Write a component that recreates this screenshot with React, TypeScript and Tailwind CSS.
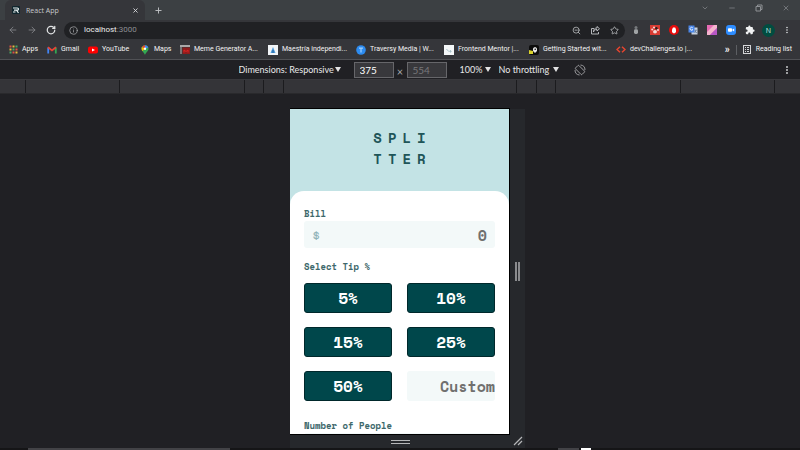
import type { ReactNode } from "react";
import {
  ArrowLeft,
  ArrowRight,
  RotateCw,
  Info,
  X,
  Plus,
  Star,
  ZoomOut,
  ChevronDown,
  Minus,
} from "lucide-react";
import { MdMoreVert, MdExtension } from "react-icons/md";

function RulerTicks({ left }: { left: boolean }) {
  const widths = ["w-[26px]", "w-[94px]", "w-[125px]", "w-[19px]", "w-5"];
  const ordered = left ? widths : [...widths].reverse();
  return (
    <>
      {ordered.map((w) => (
        <div
          key={w}
          className={`${w} shrink-0 ${left ? "border-r" : "border-l"} border-[#1b1b1e]`}
        />
      ))}
    </>
  );
}

function Bookmark({ icon, label, width }: { icon: ReactNode; label: string; width: string }) {
  return (
    <a href="#" className={`flex shrink-0 items-center gap-1 whitespace-nowrap ${width}`}>
      <span className="flex w-[10px] shrink-0 justify-center">{icon}</span>
      {label}
    </a>
  );
}

function AppsIcon() {
  const colors = ["#e05247", "#e8b93c", "#4aa564"];
  return (
    <svg width="9" height="9" viewBox="0 0 9 9">
      {[0, 1, 2].map((r) =>
        [0, 1, 2].map((c) => (
          <rect key={`${r}${c}`} x={c * 3 + 0.5} y={r * 3 + 0.5} width="2" height="2" fill={colors[(r + c) % 3]} />
        )),
      )}
    </svg>
  );
}

function GmailIcon() {
  return (
    <svg width="10" height="8" viewBox="0 0 10 8">
      <path d="M1.2 7.5V1.5" stroke="#4285f4" strokeWidth="1.8" />
      <path d="M8.8 7.5V1.5" stroke="#34a853" strokeWidth="1.8" />
      <path d="M1 1.2L5 4.4L9 1.2" stroke="#ea4335" strokeWidth="1.8" fill="none" />
    </svg>
  );
}

function YouTubeIcon() {
  return (
    <svg width="10" height="8" viewBox="0 0 10 8">
      <rect y="0.5" width="10" height="7" rx="2" fill="#f00" />
      <path d="M4 2.4L7 4L4 5.6Z" fill="#fff" />
    </svg>
  );
}

function MapsIcon() {
  return (
    <svg width="8" height="10" viewBox="0 0 8 10">
      <path d="M4 10C3.6 7.5 0.5 6.4 0.5 3.7A3.5 3.5 0 0 1 4 0.2A3.5 3.5 0 0 1 7.5 3.7C7.5 6.4 4.4 7.5 4 10Z" fill="#34a853" />
      <path d="M0.9 2A3.5 3.5 0 0 1 4 0.2L4 3.7Z" fill="#ea4335" />
      <path d="M4 0.2A3.5 3.5 0 0 1 7.3 2.5L4 3.7Z" fill="#4285f4" />
      <path d="M0.9 2L4 3.7L1.5 6.1C0.6 5 0.2 3.5 0.9 2Z" fill="#fbbc04" />
      <circle cx="4" cy="3.7" r="1.2" fill="#fff" />
    </svg>
  );
}

function MemeIcon() {
  return (
    <svg width="10" height="9" viewBox="0 0 10 9">
      <rect width="10" height="2" fill="#a9a9a9" />
      <rect y="2" width="2" height="7" fill="#777" />
      <rect x="2.5" y="2.5" width="7.5" height="6.5" fill="#8e1c1c" />
      <path d="M4 7.5V5L6 6.5L8 5V7.5" stroke="#d22" fill="none" />
    </svg>
  );
}

function MaestriaIcon() {
  return (
    <svg width="10" height="10" viewBox="0 0 10 10">
      <rect width="10" height="10" fill="#f1f4f7" />
      <path d="M5 2L7.5 8H2.5Z" fill="#4f9bd9" />
      <path d="M5 5V8" stroke="#1c5f9d" />
    </svg>
  );
}

function TraversyIcon() {
  return (
    <svg width="10" height="10" viewBox="0 0 10 10">
      <circle cx="5" cy="5" r="4.8" fill="#2d8cf0" />
      <path d="M3 3.2H7M5 3.2V7.5" stroke="#9fd0ff" strokeWidth="1.2" />
    </svg>
  );
}

function FrontendMentorIcon() {
  return (
    <svg width="10" height="10" viewBox="0 0 10 10">
      <rect width="10" height="10" fill="#f4f7f8" />
      <path d="M2.5 4C3.5 6 5 6.5 7 6.5M6 5L7.3 6.5L6 7.5" stroke="#9bb8c0" strokeWidth="0.8" fill="none" />
    </svg>
  );
}

function GettingStartedIcon() {
  return (
    <svg width="10" height="10" viewBox="0 0 10 10">
      <rect width="10" height="10" rx="2" fill="#0c0c0c" />
      <path d="M0 5L4 6V9H0Z" fill="#d9d22a" />
      <path d="M4 4C4 1.5 8 1.5 8 4V6L6 8L4 6Z" fill="#e9e9e9" />
      <circle cx="6.2" cy="4.2" r="0.8" fill="#111" />
    </svg>
  );
}

function DevChallengesIcon() {
  return (
    <svg width="10" height="7" viewBox="0 0 10 7">
      <path d="M4 0.8L1 3.5L4 6.2M6 0.8L9 3.5L6 6.2" stroke="#e8452f" strokeWidth="1.5" fill="none" />
    </svg>
  );
}

function ReadingListIcon() {
  return (
    <svg width="8" height="9" viewBox="0 0 8 9">
      <rect x="0.5" y="0.5" width="7" height="8" fill="none" stroke="#d5d6d8" />
      <path d="M2 2.5H3M4 2.5H6M2 4.5H3M4 4.5H6M2 6.5H3M4 6.5H6" stroke="#d5d6d8" />
    </svg>
  );
}

const bookmarks = [
  { label: "Apps", icon: <AppsIcon />, width: "w-[39px]" },
  { label: "Gmail", icon: <GmailIcon />, width: "w-[41px]" },
  { label: "YouTube", icon: <YouTubeIcon />, width: "w-[52px]" },
  { label: "Maps", icon: <MapsIcon />, width: "w-[40px]" },
  { label: "Meme Generator A...", icon: <MemeIcon />, width: "w-[88px]" },
  { label: "Maestría independi...", icon: <MaestriaIcon />, width: "w-[88px]" },
  { label: "Traversy Media | W...", icon: <TraversyIcon />, width: "w-[88px]" },
  { label: "Frontend Mentor |...", icon: <FrontendMentorIcon />, width: "w-[85px]" },
  { label: "Getting Started wit...", icon: <GettingStartedIcon />, width: "w-[87px]" },
  { label: "devChallenges.io |...", icon: <DevChallengesIcon />, width: "w-[87px]" },
];

function TabStrip() {
  return (
    <div className="flex h-5 shrink-0 items-center bg-[#3c4043] pl-[5px]">
      <div className="flex h-full w-[140px] items-center rounded-t-md bg-[#35363a] pr-1 pl-[7px]">
        <svg width="8" height="8" viewBox="0 0 8 8">
          <rect width="8" height="8" rx="1" fill="#10262e" />
          <path d="M1 2H5.5Q6.5 2 6.5 3T5.5 4.2H2M4.5 4.2L6.5 7M1 6H3.5" stroke="#e8f1f2" strokeWidth="1.2" fill="none" />
        </svg>
        <span className="ml-[6px] flex-1 text-[#c8cacd]">React App</span>
        <button aria-label="Close tab" className="mr-[2px]">
          <X size={7} strokeWidth={3} color="#dcdde0" />
        </button>
      </div>
      <button aria-label="New tab" className="ml-[9px]">
        <Plus size={9} strokeWidth={2.5} color="#bfc1c4" />
      </button>
      <div className="ml-auto flex items-center gap-[19px] pr-[10px] pb-1 text-[#8d9094]">
        <button aria-label="Search tabs">
          <ChevronDown size={8} />
        </button>
        <button aria-label="Minimize">
          <Minus size={8} />
        </button>
        <button aria-label="Restore">
          <svg width="8" height="8" viewBox="0 0 8 8" fill="none" stroke="currentColor">
            <path d="M1 2.5H5.5V7H1Z M2.5 2.5V1H7V5.5H5.5" />
          </svg>
        </button>
        <button aria-label="Close window">
          <X size={8} />
        </button>
      </div>
    </div>
  );
}

function ExtensionIcons() {
  return (
    <div className="flex items-center gap-[9px]">
      <svg width="10" height="10" viewBox="0 0 10 10">
        <circle cx="5" cy="2.5" r="1.5" fill="#777a7d" />
        <rect x="3" y="4.3" width="4" height="4.7" rx="1.4" fill="#a0a3a5" />
      </svg>
      <svg width="10" height="10" viewBox="0 0 10 10">
        <rect width="10" height="10" fill="#d83b32" />
        <ellipse cx="5" cy="6.8" rx="2" ry="1.7" fill="#f5dcda" />
        <circle cx="2.2" cy="4.5" r="1" fill="#f5dcda" />
        <circle cx="4" cy="2.5" r="1" fill="#f5dcda" />
        <circle cx="6.4" cy="3.2" r="1.2" fill="#222" />
        <circle cx="8" cy="5" r="1" fill="#f5dcda" />
      </svg>
      <svg width="10" height="12" viewBox="0 0 10 12">
        <circle cx="5" cy="6" r="5" fill="#e60b0b" />
        <path d="M3 5.5L4 3.5H6.2L7 5.5V8L5.8 9.2H4.2L3 8Z" fill="#fff" />
      </svg>
      <svg width="10" height="10" viewBox="0 0 10 10">
        <rect x="3.5" y="2.5" width="6" height="7" fill="#c9d2df" />
        <rect x="0.5" y="0.5" width="6" height="7" fill="#4a86e8" />
        <path d="M4.8 2.9A1.5 1.5 0 1 0 4.8 4.7H3.6" stroke="#fff" strokeWidth="0.8" fill="none" />
        <path d="M6.5 5.2H9M7.7 5.2L6.8 8M7 6.2L9 8" stroke="#5a7290" strokeWidth="0.7" />
      </svg>
      <svg width="10" height="10" viewBox="0 0 10 10">
        <rect width="10" height="10" fill="#e66bb4" />
        <path d="M0 10V7L7 0H10V3L3 10Z" fill="#f4b3cd" />
        <path d="M10 3V10H3Z" fill="#b757c4" />
      </svg>
      <svg width="10" height="10" viewBox="0 0 10 10">
        <rect width="10" height="10" rx="3" fill="#2d8cff" />
        <rect x="2" y="3.2" width="4" height="3.6" rx="0.8" fill="#fff" />
        <path d="M6.4 4.6L8.2 3.4V6.6L6.4 5.4Z" fill="#fff" />
      </svg>
      <MdExtension size={10} color="#f1f2f3" />
    </div>
  );
}

function AddressRow() {
  return (
    <div className="flex h-5 shrink-0 items-center bg-[#35363a] pl-2 text-[#e0e2e4]">
      <button aria-label="Back" className="mr-[9px] text-[#85878b]">
        <ArrowLeft size={10} />
      </button>
      <button aria-label="Forward" className="mr-[9px] text-[#85878b]">
        <ArrowRight size={10} />
      </button>
      <button aria-label="Reload" className="mr-2">
        <RotateCw size={10} strokeWidth={3} />
      </button>
      <div className="flex h-[17px] flex-1 items-center rounded-full bg-[#202124] pr-[6px] pl-[5px]">
        <Info size={9} color="#a5a7aa" />
        <span className="ml-[6px] flex-1 font-['Roboto','Liberation_Sans',sans-serif] text-[8px] leading-[10px] text-[#eceded]">
          localhost<span className="text-[#8c8e92]">:3000</span>
        </span>
        <div className="flex items-center gap-[10px] text-[#c3c5c8]">
          <ZoomOut size={9} />
          <svg width="9" height="9" viewBox="0 0 18 18" fill="none" stroke="currentColor" strokeWidth="1.8">
            <path d="M6 5H1V16H15V12M5 12C6 8 8 7 12 7V10L17 5.5L12 1V4C7 4 5 7 5 12Z" />
          </svg>
          <Star size={9} />
        </div>
      </div>
      <div className="flex items-center gap-[7px] pr-2 pl-[6px]">
        <ExtensionIcons />
        <span className="flex size-[13px] items-center justify-center rounded-full bg-[#004d40] text-[7px] text-[#d8ebe6]">
          N
        </span>
        <button aria-label="Browser menu">
          <MdMoreVert size={10} />
        </button>
      </div>
    </div>
  );
}

function BookmarksBar() {
  return (
    <nav
      aria-label="Bookmarks"
      className="flex h-5 shrink-0 items-center border-b border-[#505155] bg-[#35363a] pr-2 pl-2 font-['Roboto','Liberation_Sans',sans-serif] text-[#f4f4f4]"
    >
      <div className="flex min-w-0 flex-1 overflow-hidden">
        {bookmarks.map((b) => (
          <Bookmark key={b.label} {...b} />
        ))}
      </div>
      <button aria-label="More bookmarks" className="mr-[6px] text-[10px] leading-none font-bold">
        »
      </button>
      <span className="mr-[6px] h-[10px] w-px bg-[#5d5f63]" />
      <button className="flex items-center gap-[5px] whitespace-nowrap">
        <ReadingListIcon />
        Reading list
      </button>
    </nav>
  );
}

function DeviceSelect({ label, value, width }: { label: string; value: string; width: string }) {
  return (
    <span className={`flex items-center ${width}`}>
      <select aria-label={label} className="h-[14px] w-0 flex-1 appearance-none leading-[14px]">
        <option>{value}</option>
      </select>
      <span className="pointer-events-none h-0 w-0 border-x-[3px] border-t-[5px] border-x-transparent border-t-[#e2e2e3]" />
    </span>
  );
}

function DeviceToolbar() {
  return (
    <div className="grid h-5 shrink-0 grid-cols-[1fr_auto_1fr] items-center border-b border-[#38383c] bg-[#202024] font-['Lato','Liberation_Sans',sans-serif] text-[9px] text-[#e8e8e9]">
      <span />
      <div className="flex items-center pl-6">
        <DeviceSelect label="Dimensions" value="Dimensions: Responsive" width="w-[102px]" />
        <input
          aria-label="Width"
          defaultValue="375"
          className="ml-[13px] h-4 w-10 border border-[#66666a] bg-[#38383c] px-[5px] text-[10px] text-white"
        />
        <span className="w-[13px] pt-[3px] text-center text-[11px] text-[#a5a8ab]">×</span>
        <input
          aria-label="Height"
          defaultValue="554"
          disabled
          className="mr-[13px] h-4 w-10 border border-[#66666a] bg-[#38383c] px-[5px] text-[10px] text-[#77777a]"
        />
        <DeviceSelect label="Zoom" value="100%" width="w-[31px]" />
        <span className="w-[8px]" />
        <DeviceSelect label="Throttling" value="No throttling" width="w-[60px]" />
        <button aria-label="Rotate" className="ml-[15px] text-[#a4a4a7]">
          <svg width="12" height="12" viewBox="0 0 12 12" fill="none" stroke="currentColor" strokeWidth="0.9">
            <rect x="3.6" y="1.4" width="4.8" height="9.2" rx="0.8" transform="rotate(-45 6 6)" />
            <path d="M6.5 1A5 5 0 0 1 11 6M5.5 11A5 5 0 0 1 1 6" />
          </svg>
        </button>
      </div>
      <button aria-label="More options" className="mr-[7px] justify-self-end">
        <MdMoreVert size={12} color="#b9babc" />
      </button>
    </div>
  );
}

function TipCalculator() {
  const tips = ["5%", "10%", "15%", "25%", "50%"];
  return (
    <div className="bg-[#c3e3e5] font-['Space_Mono','Liberation_Mono',monospace] font-bold text-[#3d686b]">
      <h1 className="flex flex-col items-center pt-[18px] pb-[22px] text-[14px] leading-[21px] tracking-[6px] text-[#1f5558]">
        <span className="pl-[6px]">SPLI</span>
        <span className="pl-[6px]">TTER</span>
      </h1>
      <form className="flex flex-col rounded-t-[14px] bg-white px-[14px] pt-[17px] text-[9px] leading-3">
        <label htmlFor="bill">Bill</label>
        <div className="mt-px flex h-[27px] items-center rounded-[3px] bg-[#f3f9f9] px-2">
          <span className="text-[14px] font-normal text-[#8fb3b8]">$</span>
          <input
            id="bill"
            placeholder="0"
            className="w-0 flex-1 text-right text-[15px] placeholder:text-[#70706f]"
          />
        </div>
        <span className="mt-[13px]">Select Tip %</span>
        <div className="mt-[10px] grid grid-cols-2 gap-x-[15px] gap-y-[14px]">
          {tips.map((t) => (
            <button
              key={t}
              type="button"
              className="h-[30px] rounded-[3px] border border-[#00282b] bg-[#00474b] text-[16px] text-white"
            >
              {t}
            </button>
          ))}
          <input
            aria-label="Custom tip"
            placeholder="Custom"
            className="h-[30px] w-full rounded-[3px] bg-[#f3f9f9] text-right text-[15px] placeholder:text-[#70706f]"
          />
        </div>
        <label htmlFor="people" className="mt-[19px]">
          Number of People
        </label>
        <input id="people" className="mt-px h-[27px] shrink-0 rounded-[3px] bg-[#f3f9f9]" />
      </form>
    </div>
  );
}

function Stage() {
  return (
    <main className="grid min-h-0 flex-1 grid-cols-[1fr_220px_1fr] grid-rows-[minmax(0,1fr)_14px] bg-[#202024] pt-[14px]">
      <div />
      <div className="overflow-hidden border-t border-r border-black bg-white">
        <TipCalculator />
      </div>
      <div className="mt-px flex w-[15px] items-center justify-center gap-px bg-[#26282c]">
        <span className="h-[19px] w-[2px] bg-[#8a8b8e]" />
        <span className="h-[19px] w-[2px] bg-[#8a8b8e]" />
      </div>
      <div />
      <div className="flex flex-col items-center justify-center gap-[2px] border-t border-black bg-[#26282c]">
        <span className="h-px w-[19px] bg-[#b5b6b8]" />
        <span className="h-px w-[19px] bg-[#b5b6b8]" />
      </div>
      <div className="flex w-[15px] items-center justify-center bg-[#26282c]">
        <svg width="10" height="10" viewBox="0 0 10 10" stroke="#b5b6b8" strokeWidth="1.2">
          <path d="M1 9L9 1M5 9L9 5" />
        </svg>
      </div>
    </main>
  );
}

export default function App() {
  return (
    <div className="flex h-screen flex-col overflow-hidden bg-[#202024] font-['Open_Sans','Noto_Sans',sans-serif] text-[7px] leading-none">
      <TabStrip />
      <AddressRow />
      <BookmarksBar />
      <DeviceToolbar />
      <div className="flex h-[14px] shrink-0 border-b border-[#29292c] bg-[#343438]">
        <RulerTicks left />
        <div className="flex-1" />
        <RulerTicks left={false} />
      </div>
      <Stage />
      <div className="flex h-[2px] shrink-0 bg-[#151517]">
        <span className="ml-[28px] w-[202px] bg-[#424246]" />
        <span className="ml-[328px] w-[21px] bg-[#424246]" />
        <span className="ml-[2px] w-[10px] bg-white" />
      </div>
    </div>
  );
}
